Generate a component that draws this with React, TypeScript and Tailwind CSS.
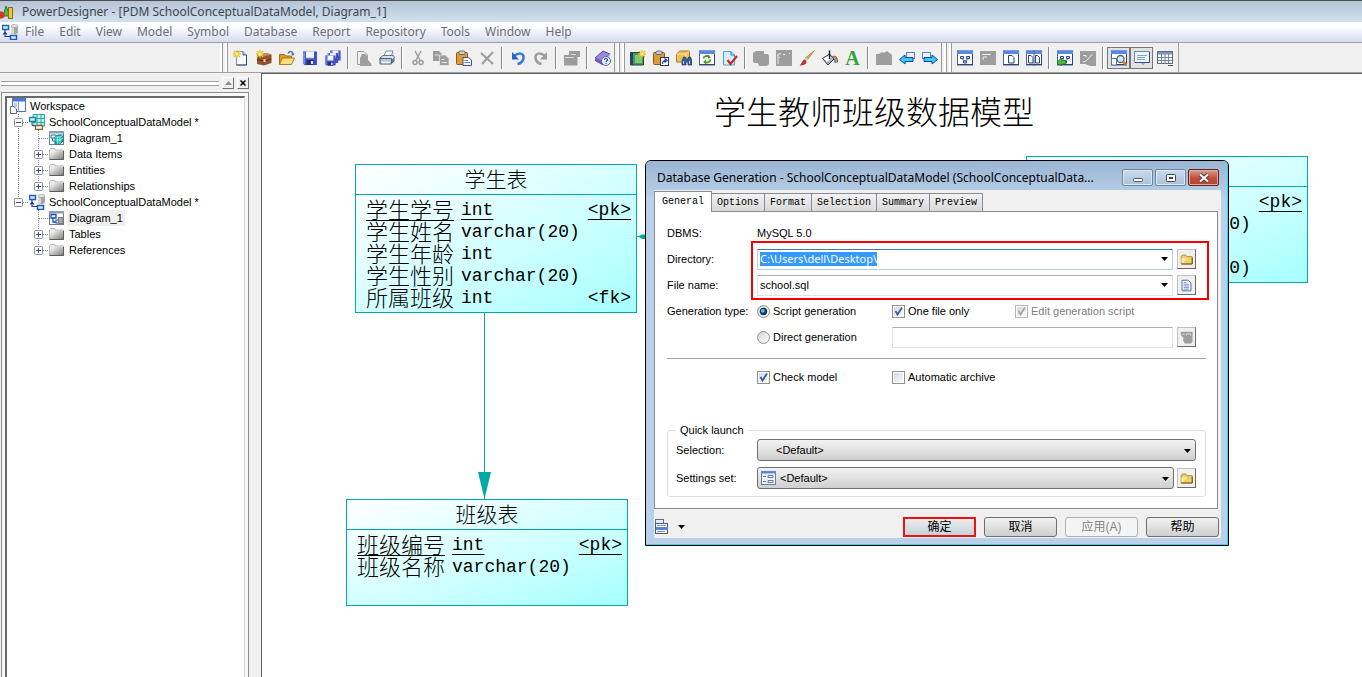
import { useEffect, useRef } from 'react';
import type { ReactNode } from 'react';
import clsx from 'clsx';

const GREY = '#9d9d9d';

// ---------- shared icon pieces ----------

function Svg({ children, size = 16 }: { children: ReactNode; size?: number }) {
  return (
    <svg width={size} height={size} viewBox="0 0 16 16" className="shrink-0" aria-hidden="true">
      {children}
    </svg>
  );
}

function Star({ x = 4, y = 4 }: { x?: number; y?: number }) {
  return (
    <g transform={`translate(${x} ${y})`}>
      <path d="M-4 0H4M0-4V4M-3-3L3 3M3-3L-3 3" stroke="#e3bd2c" strokeWidth="1.3" />
      <rect x="-1.5" y="-1.5" width="3" height="3" fill="#fff27a" />
    </g>
  );
}

function WindowFrame({ children }: { children?: ReactNode }) {
  return (
    <>
      <rect x="0.5" y="1" width="15" height="14" fill="#fff" stroke="#4a6590" />
      <rect x="0" y="0.5" width="16" height="3.5" fill="#5b86e8" />
      <path d="M1 14.5H15.5V4" fill="none" stroke="#2d466f" />
      {children}
    </>
  );
}

const miniGraph = (
  <path
    d="M3.5 6.5h3v2h-3zM9.5 6.5h3v2h-3zM6.5 11h3v2h-3zM5 8.5l2.5 2.5M11 8.5l-2.5 2.5"
    fill="#cfe0ff"
    stroke="#2948a8"
  />
);

const pageShape = (
  <>
    <path d="M3.5 1.5H10L13.5 5V15H3.5Z" fill="#f4f8ff" stroke="#7d93b5" />
    <path d="M10 1.5V5h3.5" fill="#c4d3ea" stroke="#415a82" />
    <path d="M3.5 15H13.5V5" fill="none" stroke="#2f466b" />
  </>
);

const floppy = (
  <>
    <path d="M1 1.5H15V15H2.5L1 13.5Z" fill="#4550c8" />
    <path d="M1 1.5H3V14H1Z" fill="#7d88ea" />
    <rect x="4" y="1.5" width="8" height="6.5" fill="#f2f6ff" />
    <path d="M4 8h8" stroke="#98b4e0" />
    <rect x="4.5" y="10" width="7" height="5" fill="#27307f" />
    <rect x="9" y="11" width="2" height="3" fill="#e9edff" />
  </>
);

const clipboard = (
  <>
    <rect x="0.5" y="2.5" width="11" height="12" rx="1" fill="#dd9b35" stroke="#8d5a15" />
    <rect x="3" y="1" width="6" height="3.5" rx="1" fill="#c8ced8" stroke="#535b68" strokeWidth="0.8" />
  </>
);

const smallPage = (
  <>
    <path d="M7 7.5h5.5L15.5 10v5.5H7Z" fill="#eef4ff" stroke="#41598a" />
    <path d="M8.5 10.5H12M8.5 12.5h5.5" stroke="#6f8ac0" />
  </>
);

const toolIcons: Record<string, ReactNode> = {
  newModel: (
    <>
      {pageShape}
      <Star />
    </>
  ),
  newProject: (
    <>
      <path d="M1 5l9-2 5.500 1.500V13L8 15.500 1 14Z" fill="#93532f" />
      <path d="M1 5l7 1.500 7.500-2-5.500-1.500Z" fill="#c58a5d" />
      <path d="M1 9.500l7 1.500 7.500-2" fill="none" stroke="#5f301a" />
      <rect x="7.500" y="9" width="2" height="3" fill="#efd68c" />
      <Star />
    </>
  ),
  open: (
    <>
      <path d="M0.500 14V4.500h5l1.500 1.500h5.500V14Z" fill="#d99a27" stroke="#a56f13" />
      <path d="M0.500 14.500L3.500 8H15.500L12.500 14.500Z" fill="#ffdf7c" stroke="#b07c1c" />
      <path d="M9 3.500C10.500 0.500 13.500 1 14 4" fill="none" stroke="#4c73a8" strokeWidth="1.300" />
      <path d="M12 3.500h3.800L14 6Z" fill="#4c73a8" />
    </>
  ),
  save: floppy,
  saveAll: (
    <>
      <g transform="translate(4.500 -0.500) scale(.74)">{floppy}</g>
      <g transform="translate(2 2) scale(.74)">{floppy}</g>
      <g transform="translate(-0.500 4.500) scale(.74)">{floppy}</g>
    </>
  ),
  printPreview: (
    <>
      <path d="M1.500 14.500V1.500H8L11.500 5V14.500Z" fill="none" stroke={GREY} />
      <path d="M6 4h3l3 3v3l3.500 4v2H4V8Z" fill={GREY} />
    </>
  ),
  print: (
    <>
      <path d="M5 6L7 1H14L12.500 6Z" fill="#fff" stroke="#7389a5" />
      <path d="M1 8l3-2.500H14.500L15.500 8 13 10H1Z" fill="#d9e3ef" stroke="#5f758f" />
      <path d="M1 8.500H12.500V14H1Z" fill="#b6c7dc" stroke="#4a607b" />
      <path d="M12.500 10L15.500 8V11.500L12.500 14Z" fill="#5e7693" />
      <path d="M2.500 12.500H11" stroke="#fff" strokeWidth="1.500" />
    </>
  ),
  cut: (
    <g stroke={GREY} fill="none" strokeWidth="1.500">
      <path d="M5 1L10 10M11 1L6 10" />
      <circle cx="5" cy="12.500" r="2" />
      <circle cx="11" cy="12.500" r="2" />
    </g>
  ),
  copy: (
    <>
      <path d="M0 1H6L9 4V11H0Z" fill={GREY} />
      <path d="M6.500 5h6L16 8.500V15.500H6.500Z" fill={GREY} stroke="#f0f0f0" strokeWidth="0.700" />
      <path d="M2 5H6M8.500 9.500h3M8.500 12.500h5.500" stroke="#e5e5e5" />
    </>
  ),
  paste: (
    <>
      {clipboard}
      {smallPage}
    </>
  ),
  remove: <path d="M2 3L14 14M14 2L3 14" stroke={GREY} strokeWidth="2" />,
  undo: (
    <>
      <path d="M4 6C9 2 14 3 13.500 8C13 12 10 13.500 7.500 14" fill="none" stroke="#3c79d8" strokeWidth="2.500" />
      <path d="M2 2V9.500H9Z" fill="#2d63c4" />
    </>
  ),
  redo: (
    <>
      <path d="M12 6C7 2 2 3 2.500 8C3 12 6 13.500 8.500 14" fill="none" stroke={GREY} strokeWidth="2.500" />
      <path d="M14 2V9.500H7Z" fill={GREY} />
    </>
  ),
  properties: (
    <>
      <path d="M5 1H16V7H13.500V15.500H0V5H5Z" fill={GREY} />
      <path d="M1 7.500h9M7 4.500h5" stroke="#d8d8d8" />
    </>
  ),
  help: (
    <>
      <path d="M0 8L8 1l7 3-7 8Z" fill="#9a88d8" stroke="#5e4aa5" />
      <path d="M0 8v3l8 4.500V12Z" fill="#6d59b6" />
      <path d="M8 12L15 4v3.500l-7 8Z" fill="#d9d3f2" />
      <circle cx="11" cy="11" r="4.500" fill="#e8f2ff" stroke="#4868a8" />
      <path d="M9.500 10c0-2 3-2 3 0 0 1-1.500 1-1.500 2M11 13v1" fill="none" stroke="#24458c" strokeWidth="1.200" />
    </>
  ),
  modelBook: (
    <>
      <path d="M0.500 2.500H13.500V15H0.500Z" fill="#4d9a4a" stroke="#1e4a34" />
      <path d="M0.500 2.500h2.500V15H0.500Z" fill="#24408a" />
      <path d="M5 5h7v8H5Z" fill="#82c776" />
      <Star x={12} y={4} />
    </>
  ),
  pasteShortcut: (
    <>
      {clipboard}
      <rect x="7.500" y="7.500" width="8" height="8" fill="#fff" stroke="#26386e" />
      <path d="M9.500 14c0-3 1-3.500 4-3.500M11.500 8.500l2.500 2-2.500 2" fill="none" stroke="#2c469c" strokeWidth="1.300" />
    </>
  ),
  find: (
    <>
      <path d="M0.500 4L4 1H13.500V9L10 12H0.500Z" fill="#eebf5c" stroke="#ad7d1d" />
      <path d="M0.500 4H10V12M10 4l3.500-3" fill="none" stroke="#ffe9a9" />
      <path d="M6 15V11l1.500-4h2L10 9h2l.5-2h2L16 11v4h-4v-3h-2v3Z" fill="#3d5d9a" stroke="#1e3566" strokeWidth="0.700" />
      <path d="M7.500 11v3M13.500 11v3" stroke="#b6cff5" />
    </>
  ),
  refresh: (
    <WindowFrame>
      <path d="M4.500 8.500C5 6 8 5.500 10 6.500M11.500 9.500C11 12.500 8 13 6 12" fill="none" stroke="#4b9b23" strokeWidth="1.800" />
      <path d="M9 4.500l3 2.500-3 2ZM7 9.500L4 12l3 2.500Z" fill="#4b9b23" />
    </WindowFrame>
  ),
  check: (
    <>
      <path d="M1.500 1.500H9L12.500 5V15H1.500Z" fill="#d6efff" stroke="#4f9fd1" />
      <path d="M9 1.500V5h3.500" fill="none" stroke="#2878b0" />
      <path d="M5.500 10L8.500 14 15 6" fill="none" stroke="#c5312b" strokeWidth="2.300" />
    </>
  ),
  bringFront: <path d="M0 3L3 1H11V4H15L16 6V14L14 16H6L5 13H1L0 12Z" fill={GREY} />,
  alignGrey: (
    <>
      <rect y="0" width="16" height="16" fill={GREY} />
      <path d="M2 14V4H5M7 4.500H9M3 7.500H4M13 3.500h1" fill="none" stroke="#e8e8e8" />
    </>
  ),
  brush: (
    <>
      <path d="M15.500 0.500L8.500 9.500 6.500 8Z" fill="#e2ad36" stroke="#a87918" strokeWidth="0.700" />
      <path d="M7.500 7.500L9.500 9.500 7.500 11 5.500 9.500Z" fill="#c9cdd4" />
      <path d="M6 9.500C3 10 3.500 13 0.500 15.500 4 15.500 7.500 14.500 7.500 11.500Z" fill="#c3322a" />
    </>
  ),
  bucket: (
    <>
      <path d="M0.500 8.500L7.500 4l4.500 5-6 6Z" fill="#a9b0b6" stroke="#33383e" />
      <path d="M1.500 8.500L7 5.500l2.500 2.500L5 12Z" fill="#ffffff" />
      <path d="M7.500 9V0.500" stroke="#1c2340" strokeWidth="1.500" />
      <path d="M10.500 6.500c3-1 5 1 5 6" fill="none" stroke="#e0382a" strokeWidth="1.200" />
      <path d="M11 7.700c2-.5 3.300 1 3.300 5" fill="none" stroke="#35c045" strokeWidth="1.200" />
      <path d="M11.500 9c1 0 1.600 1 1.600 4" fill="none" stroke="#3a52e8" strokeWidth="1.200" />
    </>
  ),
  exportGrey: <path d="M0 4H3L5 2.500H9L11 1l5 4V15H0Z" fill={GREY} />,
  prev: (
    <>
      <rect x="7.500" y="2.500" width="8" height="6" fill="#eaf1ff" stroke="#5f7fbd" />
      <path d="M0.500 9.500L6 5v2.500h8v4H6V14Z" fill="#2fd0ee" stroke="#1a3fae" />
    </>
  ),
  next: (
    <>
      <rect x="0.500" y="2.500" width="8" height="6" fill="#eaf1ff" stroke="#5f7fbd" />
      <path d="M15.500 9.500L10 5v2.500H2v4h8V14Z" fill="#2fd0ee" stroke="#1a3fae" />
    </>
  ),
  physical: <WindowFrame>{miniGraph}</WindowFrame>,
  windowGrey: (
    <>
      <rect y="1" width="16" height="14" fill={GREY} />
      <path d="M2 4.500H11M3 7v3M3 7h4" fill="none" stroke="#ececec" />
    </>
  ),
  report: (
    <WindowFrame>
      <path d="M5.500 5.500h3.500l2 2V13H5.500Z" fill="#f2f7ff" stroke="#30436b" />
    </WindowFrame>
  ),
  reports: (
    <WindowFrame>
      <path d="M2.500 5.500h2.500l2 2V13H2.500ZM9.500 5.500h2l2 2V13H9.500Z" fill="#f2f7ff" stroke="#30436b" />
      <path d="M8 0V16" stroke="#4a6590" />
    </WindowFrame>
  ),
  generate: (
    <WindowFrame>
      {miniGraph}
      <path d="M0 12L4.500 8v2.500H8.500V14H4.500V16Z" fill="#4fbb35" stroke="#1d7422" strokeWidth="0.700" />
    </WindowFrame>
  ),
  generateGrey: (
    <>
      <path d="M0 1H16V16H10L5 14H0Z" fill={GREY} />
      <path d="M3 5.500h3v2M12.500 4L6 11M3 12l3-1" fill="none" stroke="#ececec" />
    </>
  ),
  browser: (
    <WindowFrame>
      <path d="M0.500 8.500h5V15H0.500Z" fill="#fff" stroke="#56709b" />
      <circle cx="9.500" cy="9" r="3.500" fill="#d3e9fa" stroke="#56646f" strokeWidth="1.300" />
      <path d="M12 11.500l3.500 3.500" stroke="#c77a2b" strokeWidth="2.500" />
    </WindowFrame>
  ),
  output: (
    <>
      <path d="M0.500 1.500H15.500V12.500H11l-2 2-1.500-2h-7Z" fill="#eef4fc" stroke="#6f87a8" />
      <path d="M3 5.500H13M3 7.500H11M3 9.500h8" stroke="#8aa2c4" />
      <path d="M1 12.500H15.500V2" fill="none" stroke="#34507c" />
    </>
  ),
  resultList: (
    <>
      <rect x="0.500" y="1.500" width="15" height="12" fill="#fff" stroke="#5d6b80" />
      <rect x="1" y="2" width="14" height="2.500" fill="#7d95bd" />
      <path d="M1 7.500H15M1 10.500H15M4.500 4V13M8 4V13M11.500 4V13" stroke="#77859a" />
      <path d="M11 15.500h5" stroke="#44526a" />
    </>
  ),
};

// Each inner list is one docked toolbar; '|' draws a separator
const toolbars: string[][] = [
  [
    'newModel', 'newProject', 'open', 'save', 'saveAll', '|',
    'printPreview', 'print', '|',
    'cut', 'copy', 'paste', 'remove', '|',
    'undo', 'redo', '|',
    'properties', '|',
    'help',
  ],
  [
    'modelBook', 'pasteShortcut', 'find', 'refresh', 'check', '|',
    'bringFront', 'alignGrey', 'brush', 'bucket', 'fontColor', '|',
    'exportGrey', 'prev', 'next',
  ],
  ['physical', 'windowGrey', 'report', 'reports', '|', 'generate', 'generateGrey', '|', 'browser', 'output', 'resultList'],
];

const menus = ['File', 'Edit', 'View', 'Model', 'Symbol', 'Database', 'Report', 'Repository', 'Tools', 'Window', 'Help'];

function Grip({ first }: { first: boolean }) {
  return (
    <span className={clsx('flex w-3 justify-end gap-[2px] self-stretch border-l pr-px', first ? 'border-transparent' : 'border-[#9a9a9a]')}>
      <span className="w-[3px] border-r border-[#9a9a9a] bg-white" />
      <span className="w-[3px] border-r border-[#9a9a9a] bg-white" />
    </span>
  );
}

function Toolbar() {
  return (
    <div className="flex h-[31px] items-center overflow-hidden border-t border-b border-[#a0a0a0] bg-[#f0f0f0] pl-[217px]">
      {toolbars.map((items, i) => (
        <div key={i} className="flex h-full shrink-0 items-center">
          <Grip first={i === 0} />
          {items.map((name, j) =>
            name === '|' ? (
              <span key={j} className="flex h-[22px] w-2 justify-center">
                <span className="w-[2px] border-r border-white bg-[#8a8a8a]" />
              </span>
            ) : (
              <button
                key={j}
                type="button"
                aria-label={name}
                className={clsx(
                  'flex h-[22px] w-[23px] items-center justify-center',
                  (name === 'browser' || name === 'output') && 'border border-[#777777] bg-[#e2e2e2]'
                )}
              >
                {name === 'fontColor' ? (
                  <span className="font-['Liberation_Serif',serif] text-[20px] leading-4 font-bold text-[#2fa53a]">A</span>
                ) : (
                  <Svg>{toolIcons[name]}</Svg>
                )}
              </button>
            )
          )}
        </div>
      ))}
      <span className="ml-[2px] h-full w-px bg-[#a0a0a0]" />
    </div>
  );
}

// ---------- object browser ----------

const dbIcon = (
  <>
    <path d="M0.500 1.500h6v4h-6zM8.500 11.500h6v4h-6z" fill="#d5ecff" stroke="#1c5fb5" strokeWidth="1.500" />
    <path d="M3 6v6.500h5M3 8l-2 2.500M3 8l2 2.500" fill="none" stroke="#2430a0" strokeWidth="1.200" />
    <path d="M9 2h7v7c-2 1.500-5 1.500-7 0Z" fill="#a6a6a6" />
    <path d="M9 2h3v7.500H9Z" fill="#d8d8d8" />
    <ellipse cx="12.500" cy="2" rx="3.500" ry="1.500" fill="#ececec" stroke="#8a8a8a" strokeWidth="0.600" />
  </>
);

const treeIcons: Record<string, ReactNode> = {
  workspace: (
    <>
      <rect x="2.500" y="0.500" width="13" height="13" fill="#f4f8ff" stroke="#4b70b4" />
      <path d="M2 0.500H16V3.500H2Z" fill="#4878d8" />
      <path d="M8.500 3v10.500M4 6h3M4 8h3" stroke="#8ba6d6" />
      <path d="M0.500 8.500H4L6.500 11V15.500H0.500Z" fill="#fff" stroke="#536b94" />
    </>
  ),
  conceptual: (
    <>
      <path d="M4 0.500H15.500V12H4Z" fill="#c4f1ec" stroke="#35a89f" />
      <path d="M4 4.500H15.500M4 8.500H15.500M8 0.500V12M12 0.500V12" stroke="#35a89f" />
      <path d="M0.500 3.500h6v4h-6z" fill="#d5f4ff" stroke="#1d829d" strokeWidth="1.500" />
      <path d="M3 7.500v4h3" fill="none" stroke="#3b4f8e" />
      <path d="M6.500 11.500h7v4h-7z" fill="#fff8e0" stroke="#7d6a38" strokeWidth="1.300" />
    </>
  ),
  conceptualDiagram: (
    <WindowFrameTree>
      <path d="M2 5h5v3H2zM3.500 8v3H6" fill="none" stroke="#137e8a" />
      <path d="M6 7l3-2h5v6l-3 3H6Z" fill="#17b5b0" stroke="#0c7e7e" />
      <path d="M6 10h5l3-2M8.500 7v7M11 7v7M6 7h5l3-2" fill="none" stroke="#d3fffb" strokeWidth="0.700" />
    </WindowFrameTree>
  ),
  physical: dbIcon,
  physicalDiagram: (
    <WindowFrameTree>
      <path d="M2 4.500h5v3.500H2zM4 8v4h3" fill="none" stroke="#1d49b8" strokeWidth="1.300" />
      <rect x="7" y="10" width="3" height="3" fill="#fff" stroke="#1d49b8" />
      <path d="M9.500 7.500h4.500v6H9.500Z" fill="#a8a8a8" stroke="#777" />
    </WindowFrameTree>
  ),
  folder: (
    <>
      <defs>
        <linearGradient id="folderGrey" x1="0" y1="0" x2="1" y2="1">
          <stop offset="0" stopColor="#ffffff" />
          <stop offset="1" stopColor="#757575" />
        </linearGradient>
      </defs>
      <path d="M0.500 13.500V3.500L1.500 2.500H5.500L6.500 4H14.500V13.500Z" fill="#e9e9e9" stroke="#b5b5b5" />
      <path d="M1 5H15V14H1Z" fill="url(#folderGrey)" />
      <path d="M0.500 13.500H14.500V5" fill="none" stroke="#5e5e5e" />
    </>
  ),
};

function WindowFrameTree({ children }: { children: ReactNode }) {
  return (
    <>
      <rect x="0.500" y="1.500" width="14" height="13" fill="#fff" stroke="#6f7f8f" />
      <rect x="0" y="1" width="15" height="2.500" fill="#8aa0b8" />
      {children}
    </>
  );
}

interface TreeNode {
  label: string;
  icon: string;
  level: number;
  expander?: '+' | '-';
  trunk?: boolean;
  last?: boolean;
  selected?: boolean;
}

const tree: TreeNode[] = [
  { label: 'Workspace', icon: 'workspace', level: 0 },
  { label: 'SchoolConceptualDataModel *', icon: 'conceptual', level: 1, expander: '-' },
  { label: 'Diagram_1', icon: 'conceptualDiagram', level: 2, trunk: true },
  { label: 'Data Items', icon: 'folder', level: 2, trunk: true, expander: '+' },
  { label: 'Entities', icon: 'folder', level: 2, trunk: true, expander: '+' },
  { label: 'Relationships', icon: 'folder', level: 2, trunk: true, expander: '+', last: true },
  { label: 'SchoolConceptualDataModel *', icon: 'physical', level: 1, expander: '-', last: true },
  { label: 'Diagram_1', icon: 'physicalDiagram', level: 2, selected: true },
  { label: 'Tables', icon: 'folder', level: 2, expander: '+' },
  { label: 'References', icon: 'folder', level: 2, expander: '+', last: true },
];

// One 20px cell of dotted tree lines with an optional expander
function Branch({ node }: { node: TreeNode }) {
  return (
    <svg width="20" height="16" viewBox="0 0 20 16" className="shrink-0" aria-hidden="true">
      <path d={node.last ? 'M10.500 0V8' : 'M10.500 0V16'} stroke="#808080" strokeDasharray="1 1" />
      <path d="M11 8.500H20" stroke="#808080" strokeDasharray="1 1" />
      {node.expander && (
        <>
          <rect x="6.500" y="4.500" width="8" height="8" rx="1" fill="#fff" stroke="#8e8f8f" />
          <path d={node.expander === '+' ? 'M8 8.500H13M10.500 6V11' : 'M8 8.500H13'} stroke="#2b4f9a" />
        </>
      )}
    </svg>
  );
}

function ObjectBrowser() {
  return (
    <aside className="flex w-[261px] shrink-0 flex-col bg-[#f0f0f0] pr-3 pl-px">
      <div className="flex h-[19px] items-center gap-[3px] pt-px">
        <div className="h-[5px] flex-1 border-t border-b border-[#a0a0a0] bg-white" />
        <button type="button" aria-label="Collapse" className="flex size-3 items-center justify-center border border-t-white border-r-[#707070] border-b-[#707070] border-l-white">
          <svg width="7" height="4" viewBox="0 0 7 4"><path d="M0 4L3.500 0 7 4Z" fill="#8c8c8c" /></svg>
        </button>
        <button type="button" aria-label="Close" className="flex size-3 items-center justify-center border border-t-white border-r-[#707070] border-b-[#707070] border-l-white">
          <svg width="6" height="6" viewBox="0 0 6 6"><path d="M0.500 0.500L5.500 5.500M5.500 0.500L0.500 5.500" stroke="#000" strokeWidth="1.500" /></svg>
        </button>
      </div>
      <div className="flex-1 border border-b-0 border-[#8c8c8c] bg-[#f7f7f7] px-[3px] pt-[3px]">
        <ul className="h-full border-t-2 border-l-2 border-r border-t-[#696969] border-r-[#d5d5d5] border-l-[#696969] bg-white pl-px font-['Liberation_Sans',Arial,sans-serif] text-[11px] leading-4 text-black">
          {tree.map((node, i) => (
            <li key={i} className="flex h-4 items-center">
              {node.level === 0 && <span className="w-px" />}
              {node.level === 2 && (
                <svg width="20" height="16" className="shrink-0" aria-hidden="true">
                  {node.trunk && <path d="M10.500 0V16" stroke="#808080" strokeDasharray="1 1" />}
                </svg>
              )}
              {node.level > 0 && <Branch node={node} />}
              <span className="flex w-[17px] justify-end"><Svg>{treeIcons[node.icon]}</Svg></span>
              <span className={clsx('ml-[2px] px-[2px] whitespace-nowrap', node.selected && 'bg-[#f0f0f0]')}>{node.label}</span>
            </li>
          ))}
        </ul>
      </div>
    </aside>
  );
}

// ---------- diagram ----------

interface Column {
  name: string;
  type: string;
  tag?: string;
}

const studentColumns: Column[] = [
  { name: '学生学号', type: 'int', tag: '<pk>' },
  { name: '学生姓名', type: 'varchar(20)' },
  { name: '学生年龄', type: 'int' },
  { name: '学生性别', type: 'varchar(20)' },
  { name: '所属班级', type: 'int', tag: '<fk>' },
];

const classColumns: Column[] = [
  { name: '班级编号', type: 'int', tag: '<pk>' },
  { name: '班级名称', type: 'varchar(20)' },
];

const teacherColumns: Column[] = [
  { name: '', type: '', tag: '<pk>' },
  { name: '', type: 'varchar(20)' },
  { name: '', type: '' },
  { name: '', type: 'varchar(20)' },
];

function Entity({ title, columns, className }: { title: string; columns: Column[]; className: string }) {
  return (
    <div className={clsx('absolute w-[282px] border border-[#00a8a8] bg-linear-to-br from-white to-[#a5ffff] font-light text-black', className)}>
      <h2 className="h-[30px] border-b border-[#00a8a8] text-center font-['Noto_Sans_CJK_SC',sans-serif] text-[21px] leading-[26px]">{title}</h2>
      <table className="mt-1 mb-1 ml-[10px] w-[265px] table-fixed border-collapse">
        <tbody>
          {columns.map((c, i) => {
            const key = c.tag === '<pk>' && 'underline decoration-1';
            return (
              <tr key={i} className="h-[22px] leading-[22px]">
                <td className={clsx("w-[95px] p-0 align-top font-['Noto_Sans_CJK_SC',sans-serif] text-[22px] leading-[18px]", key, 'underline-offset-2')}>{c.name}</td>
                <td className={clsx('w-[125px] p-0 text-[18px]', key, 'underline-offset-4')}>{c.type}</td>
                <td className={clsx('p-0 text-right text-[18px]', key, 'underline-offset-4')}>{c.tag}</td>
              </tr>
            );
          })}
        </tbody>
      </table>
    </div>
  );
}

function Connectors() {
  return (
    <svg className="pointer-events-none absolute top-0 left-0 h-full w-full" aria-hidden="true">
      <path d="M222.500 239V426M375 162.500H400" stroke="#00a8a8" />
      <path d="M216 398H229L222.500 425Z" fill="#00a8a8" />
      <path d="M376 162.500L380 160.500H402V165H380Z" fill="#00a8a8" />
    </svg>
  );
}

// ---------- generation dialog ----------

const folderIcon = (
  <>
    <path d="M1.500 13.500V4L3 2.500H7L8.500 4.500H15V13.500Z" fill="#f0cd6b" stroke="#a07a22" />
    <path d="M2 6.500H14.500V13H2Z" fill="#f2cf62" />
    <path d="M2 6.500H9L3 13H2Z" fill="#ffeda8" />
    <path d="M1.500 13.500H15V6" fill="none" stroke="#4d3a0e" />
  </>
);

const sheetIcon = (
  <>
    <path d="M2.500 1.500H10L13.500 5V14.500H2.500Z" fill="#f0f6ff" stroke="#3b5689" />
    <path d="M4.500 6.500H11M4.500 8.500H11M4.500 10.500H11M4.500 12.500H11M4.500 4.500H8" stroke="#6a8ac8" />
  </>
);

const greyDbIcon = (
  <>
    <path d="M1 1H15.500V13L13.500 15.500H6L4 12V8L1 5Z" fill={GREY} />
    <path d="M8 5.500V3.500h5V5.500M3 4h3" fill="none" stroke="#e6e6e6" />
  </>
);

function Arrow() {
  return (
    <svg width="7" height="4" viewBox="0 0 7 4" className="shrink-0" aria-hidden="true">
      <path d="M0 0H7L3.500 4Z" fill="#000" />
    </svg>
  );
}

function IconButton({ label, children }: { label: string; children: ReactNode }) {
  return (
    <button
      type="button"
      aria-label={label}
      className="flex h-5 w-[19px] shrink-0 items-center justify-center border border-t-[#c0c0c0] border-r-[#696969] border-b-[#696969] border-l-[#c0c0c0] bg-[#f0f0f0]"
    >
      <Svg size={13}>{children}</Svg>
    </button>
  );
}

interface TickProps {
  label: string;
  type: 'checkbox' | 'radio';
  name?: string;
  checked?: boolean;
  disabled?: boolean;
  className?: string;
}

function Tick({ label, type, name, checked, disabled, className }: TickProps) {
  const radio = type === 'radio';
  return (
    <label className={clsx('flex items-center gap-[3px] whitespace-nowrap', disabled && 'text-[#7d7d7d]', className)}>
      <span className="grid size-[13px] place-items-center">
        <input
          type={type}
          name={name}
          defaultChecked={checked}
          disabled={disabled}
          className={clsx(
            'peer col-start-1 row-start-1 size-[13px] appearance-none border bg-linear-to-br from-[#cfd5db] to-white',
            radio ? 'rounded-full' : 'ring-1 ring-white ring-inset',
            disabled ? 'border-[#b5b5b5]' : 'border-[#8e8f8f]'
          )}
        />
        <svg width="13" height="13" viewBox="0 0 13 13" className="pointer-events-none invisible col-start-1 row-start-1 peer-checked:visible">
          {radio ? (
            <>
              <circle cx="6.500" cy="6.500" r="3.700" fill="#12385c" />
              <circle cx="5.800" cy="5.800" r="1.900" fill="#5fc0ea" />
            </>
          ) : (
            <path d="M3.500 6L5.500 9.500 10 2.500" fill="none" stroke={disabled ? '#a8a8a8' : '#3f5ba5'} strokeWidth="1.800" />
          )}
        </svg>
      </span>
      {label}
    </label>
  );
}

function Dropdown({ id, icon }: { id: string; icon?: boolean }) {
  return (
    <div className="relative flex-1">
      <select
        id={id}
        className={clsx(
          'block h-[22px] w-full appearance-none rounded-[3px] border border-[#707070] bg-linear-to-b from-[#f2f2f2] via-[#e2e2e2] to-[#cfcfcf]',
          icon ? 'pl-[22px]' : 'pl-[18px]'
        )}
      >
        <option>{'<Default>'}</option>
      </select>
      {icon && (
        <span className="pointer-events-none absolute top-[3px] left-1">
          <Svg>
            <rect x="0.500" y="1.500" width="14" height="13" fill="#eef3fb" stroke="#67809f" />
            <rect x="0" y="1" width="15" height="2.500" fill="#5b86d8" />
            <path d="M2 6.500H5M2 11.500H5M7 5.500h5v2H7zM7 10.500h5v2H7z" fill="#fff" stroke="#63789a" />
          </Svg>
        </span>
      )}
      <span className="pointer-events-none absolute top-[10px] right-[5px]"><Arrow /></span>
    </div>
  );
}

const tabs = ['General', 'Options', 'Format', 'Selection', 'Summary', 'Preview'];

function CaptionButton({ label, close, children }: { label: string; close?: boolean; children: ReactNode }) {
  return (
    <button
      type="button"
      aria-label={label}
      className={clsx(
        'flex h-[17px] w-[31px] items-center justify-center rounded-[2px] border ring-1 ring-inset',
        close
          ? 'border-[#5c2320] bg-linear-to-b from-[#dba095] via-[#c0503f] to-[#b8402e] ring-[#e3a99f]'
          : 'border-[#71859c] bg-linear-to-b from-[#c9daec] to-[#a9c1dc] ring-[#dbe7f4]'
      )}
    >
      <svg width="12" height="10" viewBox="0 0 12 10">{children}</svg>
    </button>
  );
}

function GenerationDialog() {
  const directory = useRef<HTMLInputElement>(null);

  // The path is ready to be overwritten as soon as the dialog opens
  useEffect(() => {
    directory.current?.focus();
    directory.current?.select();
  }, []);

  return (
    <section
      role="dialog"
      aria-label="Database Generation"
      className="absolute top-[86px] left-[383px] w-[584px] rounded-t-[6px] border border-black bg-[#b9d1ea] font-['Liberation_Sans',Arial,sans-serif] text-[11px] text-black"
    >
      <div className="rounded-t-[5px] border-r border-b border-[#33d6ee] bg-linear-to-b from-[#9ab6d3] to-[#b9d1ea] to-10% pr-[6px] pb-[6px] pl-2">
        <header className="flex h-[29px] items-center gap-[2px] pt-1 pr-[2px] pl-[3px]">
          <h1 className="mr-auto font-['Noto_Sans','Open_Sans',sans-serif] text-[12px] whitespace-nowrap text-black">
            Database Generation - SchoolConceptualDataModel (SchoolConceptualData...
          </h1>
          <CaptionButton label="Minimize"><rect x="1.500" y="5.500" width="9" height="3" rx="1" fill="#fff" stroke="#555" /></CaptionButton>
          <CaptionButton label="Maximize">
            <rect x="1.500" y="1.500" width="9" height="7" rx="1" fill="#fff" stroke="#444" />
            <rect x="4.500" y="4.500" width="3" height="1" fill="#fff" stroke="#444" />
          </CaptionButton>
          <CaptionButton label="Close" close>
            <path d="M2 1.500L10 8.500M10 1.500L2 8.500" stroke="#56423f" strokeWidth="4" />
            <path d="M2 1.500L10 8.500M10 1.500L2 8.500" stroke="#fff" strokeWidth="2" />
          </CaptionButton>
        </header>

        <div className="bg-[#f0f0f0] pb-px">
          <nav className="flex h-[21px] items-end font-['Liberation_Mono',monospace] text-[10px]">
            {tabs.map((t, i) => (
              <button
                key={t}
                type="button"
                className={clsx(
                  'border border-b-0 border-[#898c95] text-center',
                  i === 0
                    ? 'z-10 -mb-px h-[21px] w-[58px] bg-white pb-[2px]'
                    : 'h-[18px] border-l-0 bg-linear-to-b from-[#f3f3f3] to-[#d8d8d8] px-[5px]'
                )}
              >
                {t}
              </button>
            ))}
          </nav>

          <div className="mr-[3px] border border-[#898c95] bg-white pt-2 pr-[11px] pb-[11px] pl-3">
            <div className="flex h-[26px] items-center">
              <span className="w-[90px]">DBMS:</span>
              <span>MySQL 5.0</span>
            </div>

            <div className="relative">
              <div className="flex h-[26px] items-center pr-[10px]">
                <label htmlFor="directory" className="w-[90px]">Directory:</label>
                <div className="mr-1 flex h-[21px] flex-1 items-center border border-[#b5cfe7] border-t-[#3d7bad] pr-1 pl-[2px]">
                  <input
                    id="directory"
                    ref={directory}
                    defaultValue="C:\Users\dell\Desktop\"
                    className="min-w-0 flex-1 font-['Noto_Sans',sans-serif] text-[11px] leading-[14px] outline-none selection:bg-[#3399ff] selection:text-white"
                  />
                  <button type="button" aria-label="Directory history"><Arrow /></button>
                </div>
                <IconButton label="Browse directory">{folderIcon}</IconButton>
              </div>
              <div className="flex h-[26px] items-center pr-[10px]">
                <label htmlFor="fileName" className="w-[90px]">File name:</label>
                <div className="mr-1 flex h-[21px] flex-1 items-center border border-[#e2e3ea] border-t-[#abadb3] pr-1 pl-[2px]">
                  <input id="fileName" defaultValue="school.sql" className="min-w-0 flex-1 outline-none" />
                  <button type="button" aria-label="File name history"><Arrow /></button>
                </div>
                <IconButton label="Edit file">{sheetIcon}</IconButton>
              </div>
              {/* Highlight around the output location */}
              <div className="pointer-events-none absolute -top-[5px] -right-[3px] -bottom-[2px] left-[84px] border-2 border-[#f80000]" />
            </div>

            <div className="flex h-[26px] items-center">
              <span className="w-[90px]">Generation type:</span>
              <Tick type="radio" name="generation" label="Script generation" checked className="w-[135px]" />
              <Tick type="checkbox" label="One file only" checked className="w-[123px]" />
              <Tick type="checkbox" label="Edit generation script" checked disabled />
            </div>
            <div className="flex h-[26px] items-center pr-[10px]">
              <Tick type="radio" name="generation" label="Direct generation" className="ml-[90px] w-[135px]" />
              <input aria-label="Data source" className="mr-1 h-[21px] min-w-0 flex-1 border border-[#e2e3ea] border-t-[#abadb3]" />
              <IconButton label="Connect">{greyDbIcon}</IconButton>
            </div>

            <hr className="mt-2 border-[#a0a0a0]" />

            <div className="mt-[5px] flex h-[26px] items-center pl-[90px]">
              <Tick type="checkbox" label="Check model" checked className="w-[135px]" />
              <Tick type="checkbox" label="Automatic archive" />
            </div>

            <fieldset className="mt-[33px] rounded-[3px] border border-[#d5dfe5] px-2 pb-[5px]">
              <legend className="px-1 leading-[14px]">Quick launch</legend>
              <div className="flex h-[26px] items-center">
                <label htmlFor="selection" className="w-[81px]">Selection:</label>
                <Dropdown id="selection" />
                <span className="w-px" />
              </div>
              <div className="mt-[2px] flex h-[26px] items-center">
                <label htmlFor="settings" className="w-[81px]">Settings set:</label>
                <Dropdown id="settings" icon />
                <span className="w-[3px]" />
                <IconButton label="Browse settings">{folderIcon}</IconButton>
                <span className="w-px" />
              </div>
            </fieldset>
          </div>

          <footer className="flex h-7 items-center gap-2 pt-2 pr-[2px] font-['Liberation_Sans','Noto_Sans_CJK_SC',sans-serif] text-[12px]">
            <button type="button" aria-label="Menu" className="mr-auto flex items-center gap-2">
              <Svg>
                <rect x="1.500" y="0.500" width="8" height="4" fill="#e8eaf0" stroke="#5f6b83" />
                <rect x="1.500" y="4.500" width="12" height="10" fill="#fff" stroke="#4a5a7c" />
                <rect x="2" y="8" width="12" height="3" fill="#5b82e8" />
                <path d="M3 6.500h9M3 12.500h8" stroke="#8995ad" />
              </Svg>
              <Arrow />
            </button>
            <button type="button" className="h-5 w-[73px] border-2 border-[#f01010] bg-linear-to-b from-[#ececec] to-[#c5d3da] leading-4">确定</button>
            <button type="button" className="h-5 w-[73px] rounded-[3px] border border-[#707070] bg-linear-to-b from-[#f2f2f2] to-[#cfcfcf] leading-4">取消</button>
            <button type="button" disabled className="h-5 w-[73px] rounded-[3px] border border-[#adb2b5] bg-[#f4f4f4] leading-4 text-[#838383]">应用(A)</button>
            <button type="button" className="h-5 w-[73px] rounded-[3px] border border-[#707070] bg-linear-to-b from-[#f2f2f2] to-[#cfcfcf] leading-4">帮助</button>
          </footer>
        </div>
      </div>
    </section>
  );
}

export default function App() {
  return (
    <div className="flex h-screen flex-col overflow-hidden bg-[#f0f0f0]">
      {/* Title bar */}
      <div className="flex h-[22px] shrink-0 items-center gap-2 border-t border-[#4d4d4d] bg-linear-to-b from-[#b4c5d8] to-[#d3e1ee] font-['Noto_Sans','Open_Sans',sans-serif] text-[12px] text-[#3f454d]">
        <svg width="14" height="16" viewBox="0 0 14 16" aria-hidden="true">
          <path d="M3 12L6 2 10 12Z" fill="#58b848" stroke="#2b7a28" />
          <circle cx="1" cy="11" r="3.500" fill="#dc3027" />
          <rect x="8.500" y="3.500" width="4" height="11" fill="#f3c53c" stroke="#8d6a17" />
        </svg>
        PowerDesigner - [PDM SchoolConceptualDataModel, Diagram_1]
      </div>

      {/* Menu bar */}
      <nav className="flex h-5 shrink-0 items-center gap-[15px] bg-linear-to-b from-white from-20% to-[#d6dcef] pl-[2px] font-['Noto_Sans','Open_Sans',sans-serif] text-[12px] text-[#6c6e74]">
        <span className="-mr-2"><Svg>{dbIcon}</Svg></span>
        {menus.map((m) => (
          <button key={m} type="button">{m}</button>
        ))}
      </nav>

      <Toolbar />

      <div className="flex min-h-0 flex-1">
        <ObjectBrowser />
        <main className="relative min-w-0 flex-1 overflow-hidden border-t border-l border-[#5f5f5f] bg-white font-['Liberation_Mono','Noto_Sans_CJK_SC',monospace]">
          <h1 className="absolute top-[22px] left-[452px] text-[32px] leading-10 font-light whitespace-nowrap text-black">
            学生教师班级数据模型
          </h1>
          <Entity title="学生表" columns={studentColumns} className="top-[90px] left-[93px] h-[149px]" />
          <Entity title="班级表" columns={classColumns} className="top-[425px] left-[84px] h-[107px]" />
          <Entity title="" columns={teacherColumns} className="top-[82px] left-[764px] h-[127px]" />
          <Connectors />
          <GenerationDialog />
        </main>
      </div>
    </div>
  );
}
